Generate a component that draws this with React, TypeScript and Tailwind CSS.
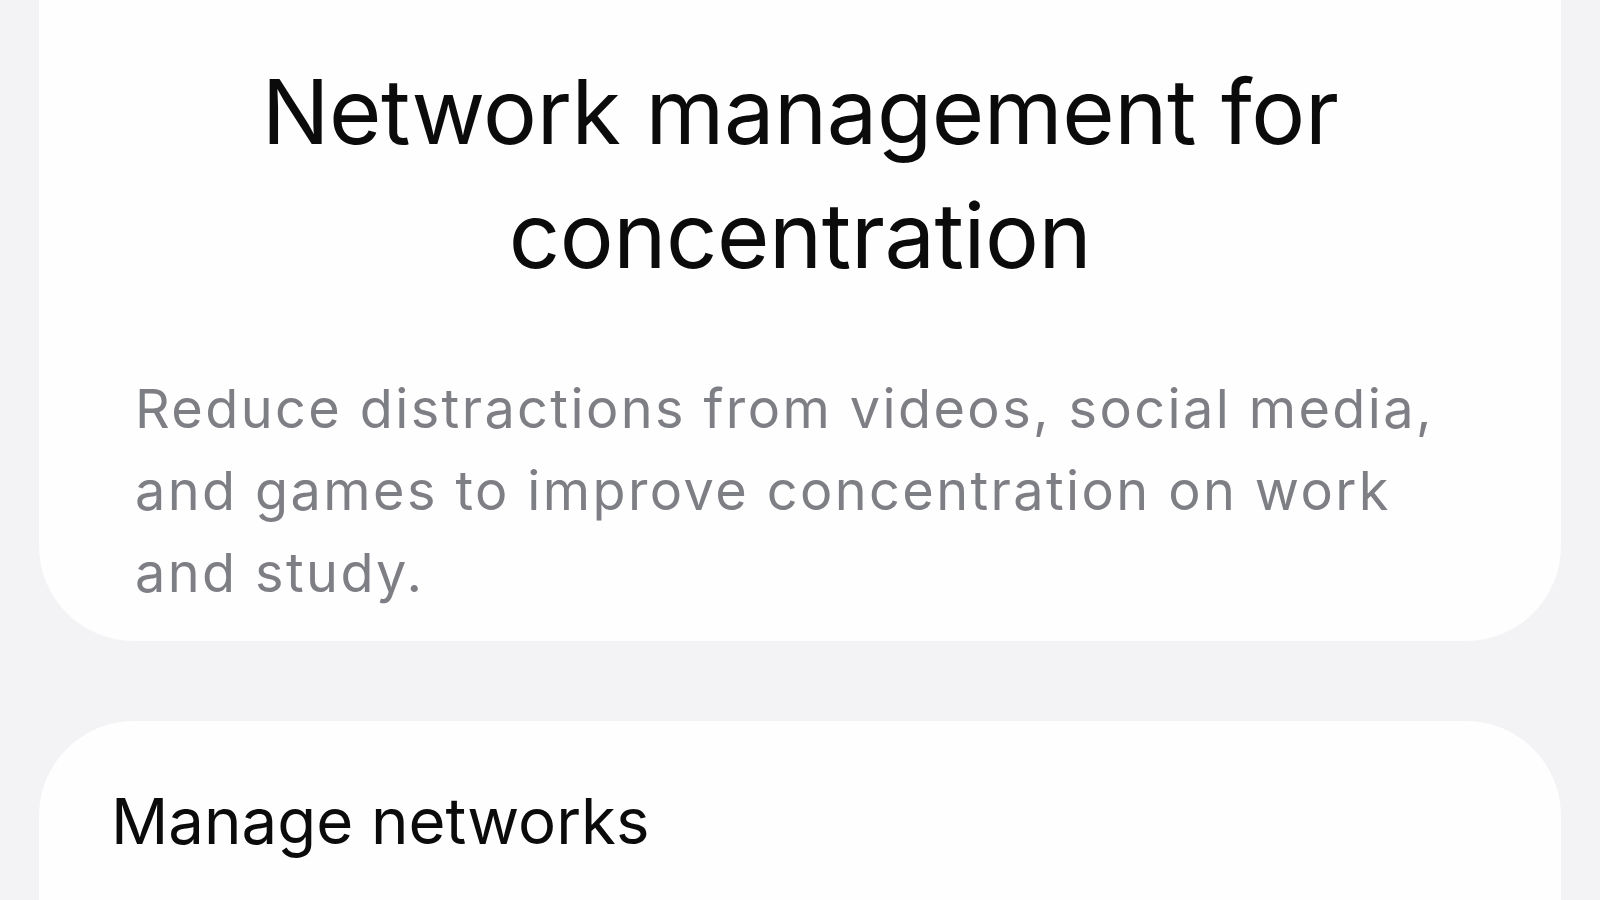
export default function App() {
  return (
    <div
      className="h-[900px] w-[1600px] overflow-hidden bg-[#f3f3f5] px-[39px]"
      style={{ fontFamily: 'Inter, Roboto, "Noto Sans", sans-serif' }}
    >
      {/* Intro card, top edge scrolled out of view */}
      <div className="mt-[-120px] rounded-[95px] bg-[#fefeff] px-[96px] pb-[27px] pt-[170px]">
        <h1 className="text-center text-[90px] font-normal leading-[124px] tracking-[-0.4px] text-[#0b0b0c]">
          Network management for
          <br />
          concentration
        </h1>
        <p className="mt-[70px] max-w-[1350px] text-[54px] leading-[82px] tracking-[2.4px] text-[#7e7e85]">
          Reduce distractions from videos, social media, and games to improve concentration on work and study.
        </p>
      </div>

      {/* Manage networks */}
      <div className="mt-[80px] h-[300px] rounded-[95px] bg-[#fefeff] px-[72px] pt-[55px]">
        <div className="text-[63.5px] leading-[90px] text-[#0b0b0c]">Manage networks</div>
      </div>
    </div>
  );
}
